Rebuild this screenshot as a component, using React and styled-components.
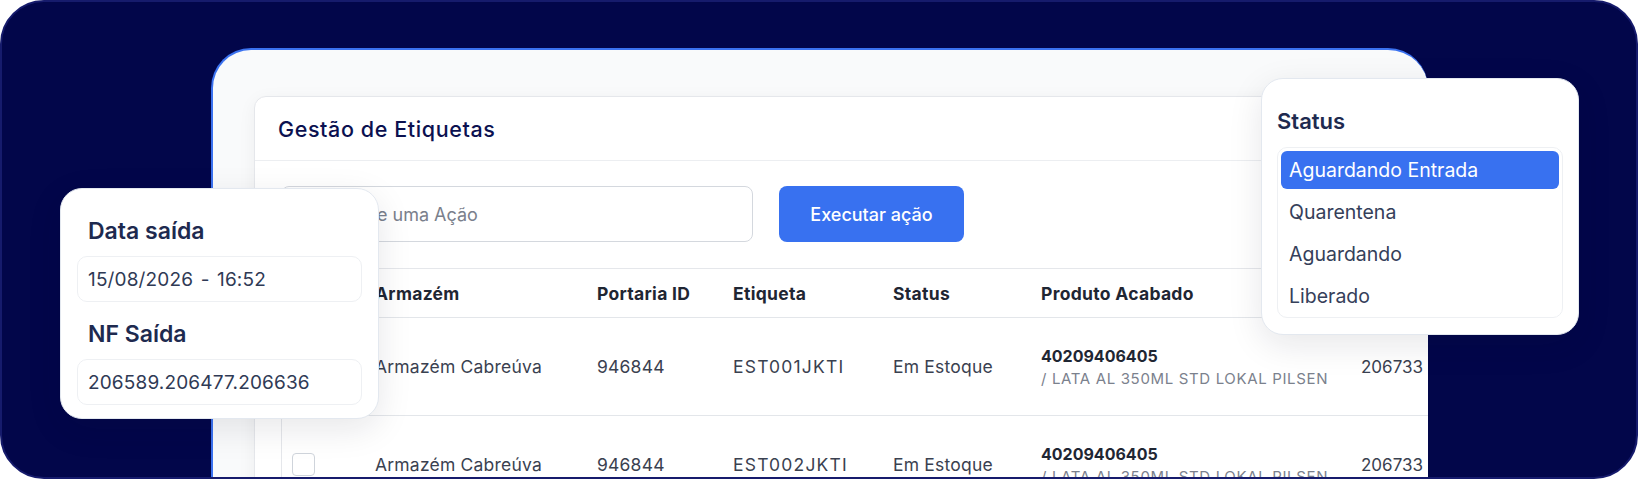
import React from "react";
import styled, { createGlobalStyle } from "styled-components";

const Global = createGlobalStyle`
	html, body {
		margin: 0;
		padding: 0;
		background: #ffffff;
	}
	body {
		font-family: Inter, "Noto Sans", "DejaVu Sans", sans-serif;
	}
	* {
		box-sizing: border-box;
	}
`;

const Frame = styled.div`
	position: relative;
	width: 1638px;
	height: 479px;
	border: 2px solid #161b6c;
	border-radius: 44px;
	background: #02064a;
	overflow: hidden;
	padding: 46px 0 0 209px;
`;

const Panel = styled.div`
	width: 1217px;
	height: 520px;
	background: #f9fafb;
	border-top: 2px solid #3b72f0;
	border-left: 2px solid #3b72f0;
	border-radius: 40px 40px 0 0;
	padding: 46px 0 0 41px;
	overflow: hidden;
`;

const Card = styled.div`
	width: 1320px;
	height: 520px;
	background: #ffffff;
	border: 1px solid #e5e7eb;
	border-radius: 12px;
	box-shadow: 0 4px 18px rgba(15, 23, 42, 0.05);
`;

const CardHeader = styled.div`
	height: 64px;
	display: flex;
	align-items: center;
	padding: 0 23px;
	border-bottom: 1px solid #eceef1;
`;

const Title = styled.h1`
	margin: 0;
	font-size: 21.5px;
	font-weight: 500;
	color: #0b1150;
	letter-spacing: 0.6px;
`;

const Toolbar = styled.div`
	display: flex;
	gap: 26px;
	padding: 25px 26px 0;
`;

const SearchBox = styled.div`
	width: 472px;
	height: 56px;
	border: 1px solid #d4d8de;
	border-radius: 8px;
	display: flex;
	align-items: center;
	padding-left: 22px;
	font-size: 18px;
	color: #7a808c;
`;

const Button = styled.button`
	width: 185px;
	height: 56px;
	border: 0;
	border-radius: 8px;
	background: #3871f0;
	color: #ffffff;
	font-family: inherit;
	font-size: 18px;
	font-weight: 500;
`;

const TableWrap = styled.div`
	margin: 26px 26px 0;
	border: 1px solid #e5e7eb;
	border-radius: 8px;
`;

const Row = styled.div`
	display: grid;
	grid-template-columns: 93px 222px 136px 160px 148px 320px 160px;
	align-items: center;
	height: ${(p) => (p.$head ? "49px" : "98px")};
	border-bottom: 1px solid #e3e6ea;
	font-size: 17.5px;
	font-weight: ${(p) => (p.$head ? 700 : 400)};
	letter-spacing: ${(p) => (p.$head ? "0.3px" : "0.2px")};
	color: ${(p) => (p.$head ? "#1f2633" : "#3a4150")};
`;

const Tag = styled.div`
	letter-spacing: 1.2px;
`;

const Num = styled.div`
	font-size: 17px;
	letter-spacing: 0;
`;

const CheckCell = styled.div`
	padding-left: 10px;
`;

const Checkbox = styled.span`
	display: block;
	width: 23px;
	height: 23px;
	border: 1.5px solid #cfd4db;
	border-radius: 4px;
	background: #ffffff;
`;

const Product = styled.div`
	display: flex;
	flex-direction: column;
	gap: 3px;
`;

const Code = styled.span`
	font-size: 16px;
	font-weight: 700;
	letter-spacing: 0;
	color: #1f2633;
`;

const Desc = styled.span`
	font-size: 15px;
	color: #7b818d;
	letter-spacing: 0.65px;
`;

const Floating = styled.div`
	position: absolute;
	left: ${(p) => p.$left}px;
	top: ${(p) => p.$top}px;
	width: ${(p) => p.$width}px;
	background: #ffffff;
	border: 1px solid #e3e8ef;
	border-radius: 22px;
	box-shadow: 0 10px 34px rgba(15, 23, 42, 0.1);
	padding: ${(p) => p.$pad};
`;

const FieldGroup = styled.div`
	display: flex;
	flex-direction: column;
	gap: 10px;
	& + & {
		margin-top: 17px;
	}
`;

const Label = styled.div`
	font-size: ${(p) => p.$size || 23}px;
	line-height: 30px;
	font-weight: 600;
	color: #1e2a4f;
	padding-left: ${(p) => p.$indent || 0}px;
`;

const Value = styled.div`
	height: 46px;
	display: flex;
	align-items: center;
	padding-left: 10px;
	border: 1px solid #eef0f3;
	border-radius: 10px;
	font-size: 19px;
	letter-spacing: 0.15px;
	word-spacing: 2px;
	color: #2f3a55;
`;

const OptionList = styled.div`
	margin-top: 11px;
	display: flex;
	flex-direction: column;
	gap: 4px;
	padding: 3px 3px 2px;
	border: 1px solid #eef0f3;
	border-radius: 10px;
`;

const Option = styled.div`
	height: 38px;
	display: flex;
	align-items: center;
	padding-left: 8px;
	border-radius: 6px;
	font-size: 19.5px;
	background: ${(p) => (p.$active ? "#3871f0" : "transparent")};
	color: ${(p) => (p.$active ? "#ffffff" : "#35405a")};
`;

const rows = [
	{ tag: "EST001JKTI" },
	{ tag: "EST002JKTI" },
];

const statuses = ["Aguardando Entrada", "Quarentena", "Aguardando", "Liberado"];

export default function App() {
	return (
		<>
			<Global />
			<Frame>
				<Panel>
					<Card>
						<CardHeader>
							<Title>Gestão de Etiquetas</Title>
						</CardHeader>
						<Toolbar>
							<SearchBox>Selecione uma Ação</SearchBox>
							<Button>Executar ação</Button>
						</Toolbar>
						<TableWrap>
							<Row $head>
								<div />
								<div>Armazém</div>
								<div>Portaria ID</div>
								<div>Etiqueta</div>
								<div>Status</div>
								<div>Produto Acabado</div>
								<div />
							</Row>
							{rows.map((r) => (
								<Row key={r.tag}>
									<CheckCell>
										<Checkbox />
									</CheckCell>
									<div>Armazém Cabreúva</div>
									<div>946844</div>
									<Tag>{r.tag}</Tag>
									<div>Em Estoque</div>
									<Product>
										<Code>40209406405</Code>
										<Desc>/ LATA AL 350ML STD LOKAL PILSEN</Desc>
									</Product>
									<Num>206733</Num>
								</Row>
							))}
						</TableWrap>
					</Card>
				</Panel>

				<Floating $left={58} $top={186} $width={319} $pad="27px 16px 13px 16px">
					<FieldGroup>
						<Label $indent={11}>Data saída</Label>
						<Value>15/08/2026 - 16:52</Value>
					</FieldGroup>
					<FieldGroup>
						<Label $indent={11}>NF Saída</Label>
						<Value>206589.206477.206636</Value>
					</FieldGroup>
				</Floating>

				<Floating $left={1259} $top={76} $width={318} $pad="27px 15px 16px 15px">
					<Label $size={22}>Status</Label>
					<OptionList>
						{statuses.map((s, i) => (
							<Option key={s} $active={i === 0}>
								{s}
							</Option>
						))}
					</OptionList>
				</Floating>
			</Frame>
		</>
	);
}
